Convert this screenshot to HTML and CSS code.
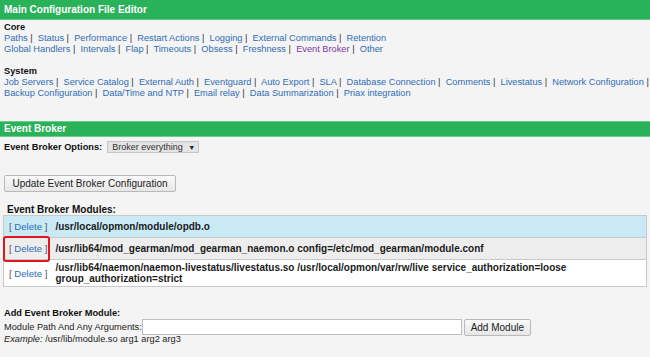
FILE: index.html
```html
<!DOCTYPE html>
<html>
<head>
    <title>Main Configuration File Editor</title>
    <link rel="stylesheet" href="styles.css">
</head>
<body>
    <div class="bar bar-main">Main Configuration File Editor</div>

    <div class="menu">
        <div class="menu-title">Core</div>
        <div class="menu-links">
            <a href="#">Paths</a> |&nbsp; <a href="#">Status</a> |&nbsp; <a href="#">Performance</a> |&nbsp; <a href="#">Restart Actions</a> |&nbsp; <a href="#">Logging</a> |&nbsp; <a href="#">External Commands</a> |&nbsp; <a href="#">Retention</a><br>
            <a href="#">Global Handlers</a> |&nbsp; <a href="#">Intervals</a> |&nbsp; <a href="#">Flap</a> |&nbsp; <a href="#">Timeouts</a> |&nbsp; <a href="#">Obsess</a> |&nbsp; <a href="#">Freshness</a> |&nbsp; <a href="#" class="current">Event Broker</a> |&nbsp; <a href="#">Other</a>
        </div>
    </div>

    <div class="menu">
        <div class="menu-title">System</div>
        <div class="menu-links">
            <a href="#">Job Servers</a> |&nbsp; <a href="#">Service Catalog</a> |&nbsp; <a href="#">External Auth</a> |&nbsp; <a href="#">Eventguard</a> |&nbsp; <a href="#">Auto Export</a> |&nbsp; <a href="#">SLA</a> |&nbsp; <a href="#">Database Connection</a> |&nbsp; <a href="#">Comments</a> |&nbsp; <a href="#">Livestatus</a> |&nbsp; <a href="#">Network Configuration</a> |<br>
            <a href="#">Backup Configuration</a> |&nbsp; <a href="#">Data/Time and NTP</a> |&nbsp; <a href="#">Email relay</a> |&nbsp; <a href="#">Data Summarization</a> |&nbsp; <a href="#">Priax integration</a>
        </div>
    </div>

    <div class="bar bar-section">Event Broker</div>

    <form class="broker-form">
        <div class="options-row">
            <label for="broker-options">Event Broker Options:</label>
            <span class="select">
                <select id="broker-options" name="broker-options">
                    <option>Broker everything</option>
                    <option>Broker nothing</option>
                </select>
                <span class="caret">&#9660;</span>
            </span>
        </div>
        <input type="submit" class="btn btn-update" value="Update Event Broker Configuration">
    </form>

    <div class="modules-title">Event Broker Modules:</div>

    <div class="modules-wrap">
        <table class="modules">
            <tr class="row-blue">
                <td class="action">[ <a href="#">Delete</a> ]</td>
                <td class="path">/usr/local/opmon/module/opdb.o</td>
            </tr>
            <tr class="row-grey">
                <td class="action">[ <a href="#">Delete</a> ]</td>
                <td class="path">/usr/lib64/mod_gearman/mod_gearman_naemon.o config=/etc/mod_gearman/module.conf</td>
            </tr>
            <tr class="row-white">
                <td class="action">[ <a href="#">Delete</a> ]</td>
                <td class="path">/usr/lib64/naemon/naemon-livestatus/livestatus.so /usr/local/opmon/var/rw/live service_authorization=loose group_authorization=strict</td>
            </tr>
        </table>
        <!-- red annotation box over the second delete link -->
        <span class="highlight"></span>
    </div>

    <form class="add-form">
        <div class="add-title">Add Event Broker Module:</div>
        <div class="add-row">
            <label for="module-path">Module Path And Any Arguments:</label>
            <input type="text" id="module-path" name="module-path" class="path-input">
            <input type="submit" class="btn btn-add" value="Add Module">
        </div>
        <div class="example"><i>Example:</i> /usr/lib/module.so arg1 arg2 arg3</div>
    </form>
</body>
</html>
```

FILE: styles.css
```css
body {
    margin: 0;
    background-color: #f4f4f4;
    font-family: "Liberation Sans", Arial, sans-serif;
    font-size: 9.25px;
    color: #222;
}

a {
    color: #2f6db5;
    text-decoration: none;
}

a.current {
    color: #7d3aa3;
}

.bar {
    background-color: #29b25a;
    color: #fff;
    font-weight: bold;
    font-size: 10px;
    padding: 0 4px;
}

.bar-main {
    height: 19px;
    line-height: 19px;
    border-bottom: 1px solid #5fc683;
}

.bar-section {
    margin-top: 22px;
    height: 14px;
    line-height: 14px;
    border-top: 1px solid #6ccb8c;
    border-bottom: 1px solid #6ccb8c;
}

.menu {
    padding: 2px 4px 0;
    line-height: 11px;
}

.menu + .menu {
    margin-top: 9px;
}

.menu-title {
    font-weight: bold;
    color: #111;
}

.menu-links {
    color: #333;
    white-space: nowrap;
}

.broker-form {
    padding: 0 4px;
}

.options-row {
    display: flex;
    align-items: center;
    gap: 5px;
    height: 12px;
    margin-top: 4px;
}

.options-row label {
    font-weight: bold;
    color: #111;
}

.select {
    display: flex;
    align-items: center;
    height: 10px;
    width: 83px;
    padding: 0 3px 0 4px;
    background-color: #e4e4e4;
    border: 1px solid #c6c6c6;
}

.select select {
    appearance: none;
    -webkit-appearance: none;
    border: none;
    background: transparent;
    padding: 0;
    margin: 0;
    font-family: inherit;
    font-size: 9px;
    color: #333;
    flex: 1;
    outline: none;
}

.caret {
    font-size: 7px;
    color: #222;
}

.btn {
    font-family: inherit;
    font-size: 10px;
    color: #222;
    background: linear-gradient(#fafafa, #e6e6e6);
    border: 1px solid #b9b9b9;
    border-radius: 2px;
    margin: 0;
}

.btn-update {
    display: block;
    margin-top: 22px;
    height: 17px;
    width: 172px;
    padding: 0;
}

.modules-title {
    margin-top: 12px;
    padding-left: 7px;
    font-size: 10px;
    font-weight: bold;
    line-height: 11px;
    color: #111;
}

.modules-wrap {
    position: relative;
    margin: 0 3px;
}

.modules {
    width: 100%;
    border-collapse: collapse;
}

.modules td {
    border-top: 1px solid #c9c9c9;
    border-bottom: 1px solid #c9c9c9;
    vertical-align: middle;
    line-height: 11px;
}

.modules td.action {
    border-left: 1px solid #c9c9c9;
    padding: 5px 4px 5px 5px;
    width: 38px;
    white-space: nowrap;
    font-size: 9.6px;
    color: #555;
}

.modules td.path {
    border-right: 1px solid #c9c9c9;
    padding: 2px 4px;
    font-size: 10px;
    font-weight: bold;
    color: #1b1b1b;
}

.row-blue {
    background-color: #c9e9f5;
}

.row-grey {
    background-color: #ededed;
}

.row-white {
    background-color: #fff;
}

.highlight {
    position: absolute;
    left: 0;
    top: 21px;
    width: 43px;
    height: 22px;
    border: 2px solid #e3141b;
    border-radius: 3px;
}

.add-form {
    padding: 0 4px;
    margin-top: 21px;
}

.add-title {
    font-weight: bold;
    line-height: 11px;
    color: #111;
}

.add-row {
    display: flex;
    align-items: center;
    height: 16px;
}

.path-input {
    box-sizing: border-box;
    width: 320px;
    height: 16px;
    margin: 0 2px 0 0;
    padding: 0 2px;
    border: 1px solid #bdbdbd;
    background-color: #fff;
    font-family: inherit;
    font-size: 9.25px;
}

.btn-add {
    height: 17px;
    width: 67px;
    padding: 0;
}

.example {
    margin-top: -1px;
    line-height: 11px;
}
```
